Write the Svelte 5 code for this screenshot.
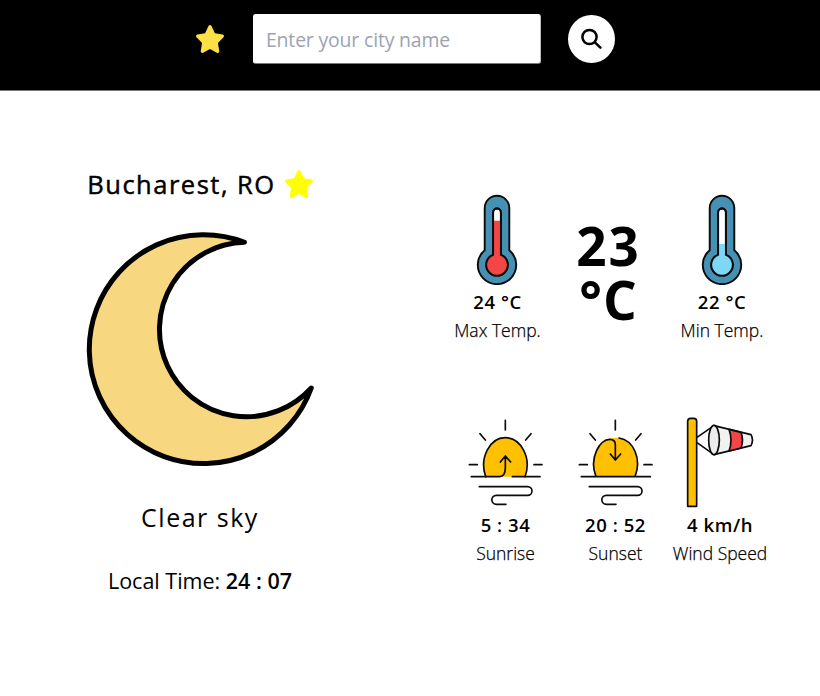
<script>
  const starPath =
    'M259.3 17.8L194 150.2 47.9 171.5c-26.2 3.8-36.7 36.1-17.7 54.6l105.7 103-25 145.5c-4.5 26.3 23.2 46 46.4 33.7L288 439.6l130.7 68.7c23.2 12.2 50.9-7.4 46.4-33.7l-25-145.5 105.7-103c19-18.5 8.5-50.8-17.7-54.6L382 150.2 316.7 17.8c-11.7-23.6-45.6-23.9-57.4 0z';
  let city = $state('');
</script>

{#snippet star(color)}
  <svg class="star" viewBox="20 0 536 512" preserveAspectRatio="none"><path d={starPath} fill={color} /></svg>
{/snippet}

{#snippet thermometer(color, level)}
  <svg class="thermo" viewBox="0 0 42 91" stroke="#0b0b0b" stroke-width="1.9">
    <path d="M8.7 56.2V14a12.3 12.3 0 0 1 24.6 0V56.2A19.2 19.2 0 1 1 8.7 56.2Z" fill="#4690b4" />
    <path d="M17.1 60.8V18.4a3.9 3.9 0 0 1 7.8 0V60.8A10.8 10.8 0 1 1 17.1 60.8Z" fill="#fff" />
    <path d="M17.1 60.8V{level}H24.9V60.8A10.8 10.8 0 1 1 17.1 60.8Z" fill={color} stroke="none" />
    <path d="M17.1 60.8V18.4a3.9 3.9 0 0 1 7.8 0V60.8A10.8 10.8 0 1 1 17.1 60.8Z" fill="none" />
  </svg>
{/snippet}

{#snippet sun(rising)}
  <svg class="sun" viewBox="39 39 225 264" fill="none" stroke="#0b0b0b" stroke-width="5" stroke-linecap="round" stroke-linejoin="round">
    <path d="M92 215C72 158 105 98 151 98S231 158 210 215Z" fill="#ffc000" stroke="none" />
    <path d="M151 46V75M75 86L91 105M228 86L212 105M43 179H67M237 179H261" />
    {#if rising}
      <path d="M92 215C72 158 105 98 151 98S231 158 210 215" />
      <path d="M49 215H134Q151 213 151 188V154M136 171L151 153 167 171M172 215H255" />
    {:else}
      <path d="M93 215C71 158 105 103 134 103Q151 103 151 119V165M136 147L151 165 167 147M162 99C205 106 231 160 210 215M49 215H256" />
    {/if}
    <path d="M73 245H218A13 13 0 0 1 218 271H124A13.5 13.5 0 0 0 124 298H153" />
  </svg>
{/snippet}

<header>
  {@render star('#fde047')}
  <input type="text" placeholder="Enter your city name" bind:value={city} />
  <button aria-label="Search">
    <svg viewBox="0 0 24 24" fill="none" stroke="#000" stroke-width="2.5" stroke-linecap="round">
      <circle cx="9.5" cy="10" r="7.1" /><path d="M14.9 15.4L20.4 20.7" />
    </svg>
  </button>
</header>

<main>
  <section class="place">
    <h1><span>Bucharest, RO</span>{@render star('#ffff00')}</h1>
    <svg class="moon" viewBox="0 0 240 240">
      <path d="M164.5 13.3A114.4 114.4 0 1 0 231.3 159A87.2 87.2 0 1 1 164.5 13.3Z" fill="#f7d780" stroke="#000" stroke-width="5" stroke-linejoin="round" />
    </svg>
    <p class="sky">Clear sky</p>
    <p class="time">Local Time: <b>24 : 07</b></p>
  </section>

  <section class="details">
    <div class="row temps">
      <div class="item">
        {@render thermometer('#f54545', 26.7)}
        <p class="value">24 °C</p>
        <p class="label">Max Temp.</p>
      </div>
      <p class="now"><span class="digits">23</span><span>°C</span></p>
      <div class="item">
        {@render thermometer('#7dd8f8', 50)}
        <p class="value">22 °C</p>
        <p class="label">Min Temp.</p>
      </div>
    </div>
    <div class="row extras">
      <div class="item">
        {@render sun(true)}
        <p class="value">5 : 34</p>
        <p class="label">Sunrise</p>
      </div>
      <div class="item">
        {@render sun(false)}
        <p class="value">20 : 52</p>
        <p class="label">Sunset</p>
      </div>
      <div class="item">
        <svg class="wind" viewBox="63 36 204 273" stroke="#0b0b0b" stroke-width="5" stroke-linejoin="round">
          <path d="M96 97L147 62M96 113L147 149" />
          <path d="M147 62L258 89Q267 105 258 122L147 149Z" fill="#f2f2f2" />
          <path d="M192 73Q204 105 192 138L228 129Q237 105 228 82Z" fill="#f54545" />
          <ellipse cx="147" cy="105" rx="16" ry="44" fill="#ececec" />
          <path d="M68 304V49Q68 40 77 40H86Q95 40 95 49V304Z" fill="#ffc000" />
        </svg>
        <p class="value">4 km/h</p>
        <p class="label wide">Wind Speed</p>
      </div>
    </div>
  </section>
</main>

<style>
  :global(body) { background: #fff; }
  :global(#app) { font-family: "Open Sans", "Noto Sans", sans-serif; color: #000; }
  p, h1 { margin: 0; white-space: nowrap; }
  svg { display: block; flex: none; }
  header {
    box-sizing: border-box;
    height: 91px;
    padding: 14px 0 0 196px;
    display: flex;
    align-items: flex-start;
    background: #000;
    border-bottom: 1px solid #777;
  }
  .star { width: 28px; height: 28px; }
  header .star { margin-top: 11px; }
  input {
    box-sizing: border-box;
    width: 288px;
    height: 50px;
    margin: 0 27px 0 29px;
    padding: 1px 14px 0 12px;
    border: 1px solid #fff;
    border-right-color: #bbb;
    border-bottom-color: #777;
    border-radius: 3px;
    background: #fff;
    font: 400 19.4px "Open Sans", "Noto Sans", sans-serif;
    letter-spacing: -0.15px;
    outline: none;
  }
  input::placeholder { color: #9ca3af; opacity: 1; }
  button {
    width: 47px;
    height: 48px;
    margin-top: 1px;
    padding: 0;
    border: 0;
    border-radius: 50%;
    background: #fff;
    display: grid;
    place-items: center;
  }
  button svg { width: 24px; height: 24px; }
  main { display: flex; height: 605px; }
  .place {
    width: 400px;
    padding-top: 73px;
    display: flex;
    flex-direction: column;
    align-items: center;
  }
  h1 {
    display: flex;
    align-items: center;
    height: 40px;
    font-size: 25.5px;
    font-weight: 400;
    line-height: 40px;
    letter-spacing: 1.5px;
    -webkit-text-stroke: 0.45px #000;
  }
  h1 .star { margin: 0 0 1px 9px; }
  .moon { width: 240px; height: 240px; margin-top: 25px; }
  .sky {
    margin-top: 28px;
    font-size: 25px;
    line-height: 40px;
    letter-spacing: 1.5px;
  }
  .time {
    margin-top: 24px;
    font-size: 21.5px;
    line-height: 40px;
    letter-spacing: 0;
  }
  .time b { font-weight: 600; }
  .details { padding: 103px 0 0 50px; }
  .row { display: grid; }
  .temps { grid-template-columns: 95px 127px 100px; height: 222px; }
  .extras { grid-template-columns: 111px 109px 100px; }
  .item { display: flex; flex-direction: column; align-items: center; }
  .thermo { width: 42px; height: 91px; margin: 0 1px 2px 0; }
  .value { font-size: 18.5px; font-weight: 600; line-height: 29px; letter-spacing: 0.55px; }
  .label {
    font-size: 17.5px;
    font-weight: 300;
    line-height: 28px;
    -webkit-text-stroke: 0.25px #000;
  }
  .now {
    padding-top: 25px;
    font-size: 53px;
    font-weight: 700;
    line-height: 54px;
    letter-spacing: 1px;
    display: flex;
    flex-direction: column;
    align-items: center;
  }
  .digits { letter-spacing: 2px; }
  .sun { width: 75px; height: 88px; margin: 2px 0 4px; }
  .wind { width: 68px; height: 91px; margin: 1px 0 2px; }
</style>
